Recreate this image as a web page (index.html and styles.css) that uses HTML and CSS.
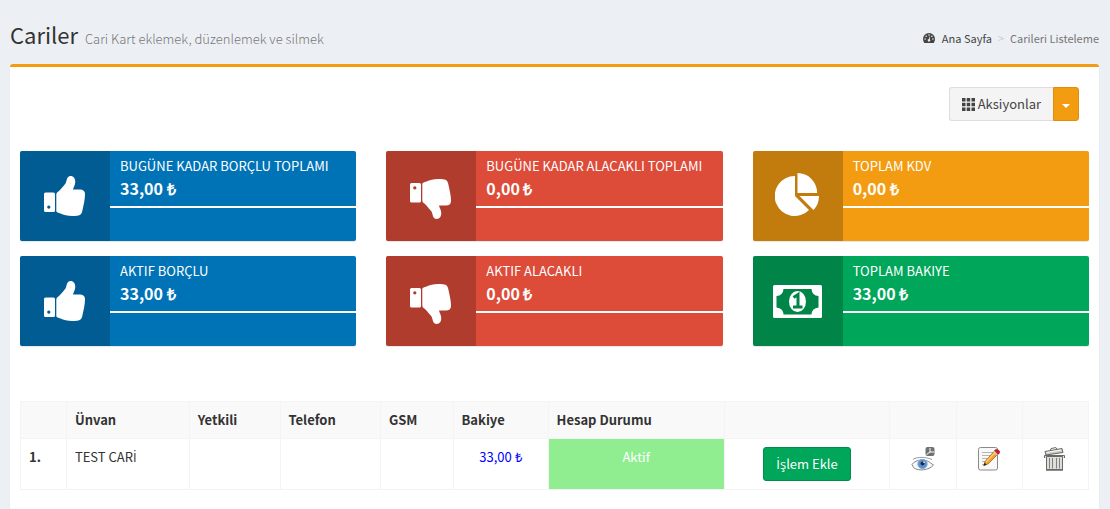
FILE: index.html
```html
<!DOCTYPE html>
<html lang="tr">
<head>
<meta charset="utf-8">
<meta name="viewport" content="width=device-width, initial-scale=1">
<title>Cariler</title>
<link rel="stylesheet" href="styles.css">
</head>
<body>
<svg class="sprite" aria-hidden="true">
  <symbol id="thumb" viewBox="0 0 41 40">
    <path fill-rule="evenodd" d="M1.500 16.500H9.500Q11 16.500 11 18V34.500Q11 36 9.500 36H1.500Q0 36 0 34.500V18Q0 16.500 1.500 16.500ZM4.800 29.500A1.600 1.600 0 1 0 4.810 29.500Z"/>
    <path d="M12.300 18.500C12.300 16.500 14 16 15.500 14.500C18 11.500 20 9.500 21.500 7.500C22.800 5.500 22.500 0 26.500 0C30 0 31.500 3 31.200 6.500C31 9.500 29.500 11 29 13.500H36C39 13.500 41 15 41 18C41 24 39.500 29 38.500 34C37.800 38 36.500 39.500 33 39.700C26 40.500 20.500 39.500 16.500 37.500C14.500 36.500 12.300 36.500 12.300 35Z"/>
  </symbol>
</svg>
<div class="page">
  <header class="page-head">
    <h1 class="page-title">Cariler <small class="page-note">Cari Kart eklemek, düzenlemek ve silmek</small></h1>
    <nav class="crumbs" aria-label="Konum">
      <a class="crumb-link" href="#">
        <svg class="dash-icon" viewBox="0 0 12 10" aria-hidden="true"><path fill="#444" d="M6 0A6 6 0 0 0 0 6C0 7.300.400 8.500 1 9.500Q1.300 10 1.700 10H10.300Q10.700 10 11 9.500C11.600 8.500 12 7.300 12 6A6 6 0 0 0 6 0Z"/><g fill="#ecf0f5"><circle cx="2.100" cy="6" r=".8"/><circle cx="3.200" cy="3.200" r=".8"/><circle cx="6" cy="2" r=".8"/><circle cx="8.900" cy="3.200" r=".8"/><circle cx="9.900" cy="6" r=".8"/><path d="M6.700 3.500L7.300 3.700L6.700 6.200A1.300 1.300 0 1 1 5.900 6Z"/></g></svg>
        Ana Sayfa</a>
      <span class="crumb-sep">&gt;</span>
      <span class="crumb-here">Carileri Listeleme</span>
    </nav>
  </header>

  <main class="box">
    <div class="toolbar">
      <button class="btn btn-default" type="button">
        <svg class="grid-icon" viewBox="0 0 13 13" aria-hidden="true"><path d="M0 0h3.500v3.500H0zM4.700 0h3.500v3.500H4.700zM9.500 0H13v3.500H9.500zM0 4.700h3.500v3.500H0zM4.700 4.700h3.500v3.500H4.700zM9.500 4.700H13v3.500H9.500zM0 9.500h3.500V13H0zM4.700 9.500h3.500V13H4.700zM9.500 9.500H13V13H9.500z"/></svg>
        Aksiyonlar</button>
      <button class="btn btn-caret" type="button" aria-label="Aksiyon menüsü"><span class="caret"></span></button>
    </div>

    <section class="cards">
      <div class="card blue">
        <div class="card-icon"><svg class="thumb-up"><use href="#thumb"/></svg></div>
        <div class="card-body"><span class="card-label">BUGÜNE KADAR BORÇLU TOPLAMI</span><strong class="card-value">33,00 ₺</strong><div class="card-line"></div></div>
      </div>
      <div class="card red">
        <div class="card-icon"><svg class="thumb-down"><use href="#thumb"/></svg></div>
        <div class="card-body"><span class="card-label">BUGÜNE KADAR ALACAKLI TOPLAMI</span><strong class="card-value">0,00 ₺</strong><div class="card-line"></div></div>
      </div>
      <div class="card orange">
        <div class="card-icon"><svg class="pie" viewBox="0 0 46 46"><path d="M20 3V23L34 37A20 20 0 1 1 20 3ZM22.500 0A20 20 0 0 1 42.200 20H22.500ZM24.500 23H44A20 20 0 0 1 38.500 37Z"/></svg></div>
        <div class="card-body"><span class="card-label">TOPLAM KDV</span><strong class="card-value">0,00 ₺</strong><div class="card-line"></div></div>
      </div>
      <div class="card blue">
        <div class="card-icon"><svg class="thumb-up"><use href="#thumb"/></svg></div>
        <div class="card-body"><span class="card-label">AKTIF BORÇLU</span><strong class="card-value">33,00 ₺</strong><div class="card-line"></div></div>
      </div>
      <div class="card red">
        <div class="card-icon"><svg class="thumb-down"><use href="#thumb"/></svg></div>
        <div class="card-body"><span class="card-label">AKTIF ALACAKLI</span><strong class="card-value">0,00 ₺</strong><div class="card-line"></div></div>
      </div>
      <div class="card green">
        <div class="card-icon"><svg class="cash" viewBox="0 0 49 33"><rect width="49" height="33" rx="1.500"/><path fill="#008548" d="M10.500 4H38.500Q39 10.500 45.500 11V22.500Q39 23 38.500 29.500H10.500Q10 23 3.500 22.500V11Q10 10.500 10.500 4Z"/><ellipse cx="24.500" cy="16.500" rx="8.500" ry="10.500"/><path fill="none" stroke="#008548" stroke-width="3" d="M20.500 12.500L25 9.500V21M20 22H29.500"/></svg></div>
        <div class="card-body"><span class="card-label">TOPLAM BAKIYE</span><strong class="card-value">33,00 ₺</strong><div class="card-line"></div></div>
      </div>
    </section>

    <table class="list">
      <colgroup><col class="c-no"><col class="c-name"><col class="c-auth"><col class="c-tel"><col class="c-gsm"><col class="c-bal"><col class="c-state"><col class="c-add"><col class="c-act"><col class="c-act"><col class="c-act"></colgroup>
      <thead>
        <tr><th></th><th>Ünvan</th><th>Yetkili</th><th>Telefon</th><th>GSM</th><th>Bakiye</th><th>Hesap Durumu</th><th></th><th></th><th></th><th></th></tr>
      </thead>
      <tbody>
        <tr>
          <th scope="row">1.</th>
          <td>TEST CAR<span class="dotted">İ</span></td><td></td><td></td><td></td>
          <td class="balance">33,00 ₺</td>
          <td class="state">Aktif</td>
          <td class="mid"><button class="btn btn-add" type="button"><span class="dotted">İ</span>şlem Ekle</button></td>
          <td class="mid"><a class="act" href="#" aria-label="Görüntüle"><svg width="24" height="24" viewBox="0 0 24 24"><rect x="14.500" width="9" height="9" rx="2" fill="#6f7173"/><path fill="none" stroke="#fff" d="M19 1V5M19 5L15.500 7.500M19 5H23"/><path fill="none" stroke="#999" d="M2 12.300C7 9.500 15 10 21 12.500"/><path fill="#f8f8f8" stroke="#858585" d="M1 17.500C5 11.500 16 12 19.500 16L22.500 18C18 23.500 7 24.500 2.500 20.500Z"/><circle cx="11.500" cy="17" r="4.700" fill="#5b8fd0"/><circle cx="11.500" cy="17" r="4.700" fill="none" stroke="#84aee2"/><circle cx="11.500" cy="16.500" r="2" fill="#252c38"/><circle cx="13" cy="15.300" r=".8" fill="#fff"/></svg></a></td>
          <td class="mid"><a class="act" href="#" aria-label="Düzenle"><svg width="24" height="24" viewBox="0 0 24 24"><rect x="1.500" y=".5" width="19" height="22.500" rx="2" fill="#f9f9f9" stroke="#8a8a88"/><path stroke="#b5b5b5" d="M5 5.500H16M5 8.500H14M5 11.500H11M5 14.500H9M5 17.500H8"/><path fill="#f5a334" stroke="#a15b12" stroke-width=".8" d="M17.500 4L21 7L11 17L7 18.500L8 14.500Z"/><path stroke="#ffd06a" stroke-width="1.200" d="M17.800 5.500L9.200 15"/><path fill="#d6d6ce" d="M16.500 5L18 3.500L21.500 7L20 8.500Z"/><path fill="#cc1f2b" stroke="#941520" stroke-width=".6" d="M17.500 3.500C19 1.500 23.500 3 22.500 6L21 7.500Z"/><path fill="#222" d="M7.800 15.800L6.300 19L9.500 17.500Z"/></svg></a></td>
          <td class="mid"><a class="act" href="#" aria-label="Sil"><svg width="24" height="24" viewBox="0 0 24 24"><path fill="#c9c9c5" stroke="#696966" d="M2 4.500L19 1.500L20 5.500L3 8Z"/><path fill="none" stroke="#696966" d="M7.500 3.300L8 1.500L13 .6L14 2"/><path stroke="#fff" d="M3.500 5.500L18 3"/><path fill="#dededb" stroke="#696966" d="M3.500 9.500H19.500V22.500H3.500ZM1.500 11V8.500H21.500V11"/><path stroke="#80807c" d="M6.500 11V21.500M9.500 11V21.500M13.500 11V21.500M16.500 11V21.500"/><path stroke="#696966" stroke-width="1.500" d="M3 23H20"/></svg></a></td>
        </tr>
      </tbody>
    </table>
  </main>
</div>
</body>
</html>
```
FILE: styles.css
```css
* { box-sizing: border-box; }

body {
  margin: 0;
  background: #ecf0f5;
  color: #333;
  font: 13px/20px "Noto Sans CJK SC", "Open Sans", sans-serif;
}

.sprite { display: none; }

.page {
  display: flex;
  flex-direction: column;
  min-height: 100vh;
  padding: 0 11px 0 10px;
}

.page-head {
  display: flex;
  justify-content: space-between;
  align-items: flex-end;
  padding: 20px 0 11px;
}

.page-title {
  margin: 0;
  font-size: 22px;
  font-weight: 400;
  line-height: 28px;
}

.page-note {
  margin-left: 2px;
  color: #777;
  font-size: 13px;
  font-weight: 300;
}

.crumbs {
  display: flex;
  align-items: center;
  padding-bottom: 5px;
  font-size: 11px;
}

.crumb-link {
  display: flex;
  align-items: center;
  gap: 7px;
  color: #444;
  text-decoration: none;
}

.dash-icon { width: 12px; height: 10px; }
.crumb-sep { padding: 0 6px; color: #ccc; }
.crumb-here { color: #777; }

.box {
  flex: 1;
  padding: 20px 10px 19px;
  background: #fff;
  border-top: 3px solid #f39c12;
  border-radius: 3px 3px 0 0;
  box-shadow: 0 1px 1px rgba(0, 0, 0, .1);
}

.toolbar {
  display: flex;
  justify-content: flex-end;
  padding-right: 10px;
}

.btn {
  height: 34px;
  padding: 0 12px;
  border: 1px solid #ddd;
  border-radius: 3px;
  font: inherit;
}

.btn-default {
  display: flex;
  align-items: center;
  gap: 3px;
  background: #f4f4f4;
  color: #444;
  border-right: 0;
  border-radius: 3px 0 0 3px;
}

.grid-icon { width: 13px; height: 13px; fill: #444; }

.btn-caret {
  padding: 0 8px;
  background: #f39c12;
  border-color: #e08e0b;
  border-radius: 0 3px 3px 0;
}

.caret {
  display: block;
  margin-top: 3px;
  border: 4px solid transparent;
  border-top-color: #fff;
  border-bottom: 0;
}

.btn-add {
  background: #00a65a;
  border-color: #008d4c;
  color: #fff;
}

.dotted {
  font-family: "Open Sans", sans-serif;
  line-height: 1;
}

.cards {
  display: grid;
  grid-template-columns: repeat(3, 1fr);
  gap: 15px 30px;
  margin: 30px 0 55px;
}

.card {
  display: flex;
  min-height: 90px;
  border-radius: 2px;
  box-shadow: 0 1px 1px rgba(0, 0, 0, .1);
  color: #fff;
}

.blue { background: #0073b7; }
.red { background: #dd4b39; }
.orange { background: #f39c12; }
.green { background: #00a65a; }

.card-icon {
  display: flex;
  flex: 0 0 90px;
  align-items: center;
  justify-content: center;
  border-radius: 2px 0 0 2px;
  background: rgba(0, 0, 0, .2);
  fill: #fff;
}

.thumb-up { width: 41px; height: 40px; margin-right: 2px; }
.thumb-down { width: 41px; height: 40px; margin: 6px 2px 0 0; transform: scaleY(-1); }
.pie { width: 46px; height: 46px; }
.cash { width: 49px; height: 33px; }

.card-body { flex: 1; padding-top: 5px; }
.card-label, .card-value { display: block; padding: 0 10px; }
.card-value { font-size: 16px; line-height: 24px; }
.card-line { height: 2px; margin-top: 6px; background: #fff; }

.list {
  width: 100%;
  table-layout: fixed;
  border-collapse: collapse;
}

.list th, .list td {
  padding: 8px;
  border: 1px solid #f4f4f4;
  text-align: left;
  vertical-align: top;
}

.list thead th { height: 37px; background: #f9f9f9; }

.c-no { width: 4.3%; }
.c-name { width: 11.5%; }
.c-auth { width: 8.5%; }
.c-tel { width: 9.4%; }
.c-gsm { width: 6.8%; }
.c-bal { width: 8.9%; }
.c-state { width: 16.5%; }
.c-add { width: 15.5%; }
.c-act { width: 6.2%; }

.list .balance { color: #00f; text-align: center; }
.list .state { background: #90ee90; color: #fff; text-align: center; }
.list .mid { text-align: center; }

.act { display: inline-block; height: 24px; }
.act svg { display: block; }
```
